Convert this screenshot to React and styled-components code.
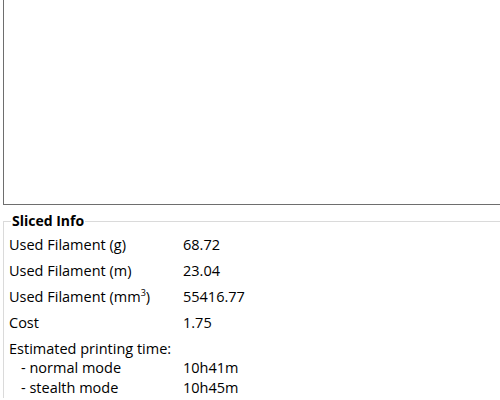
import styled, { createGlobalStyle } from "styled-components";

const Global = createGlobalStyle`
  body {
    margin: 0;
    background: #ffffff;
    font-family: "Open Sans", "Noto Sans", sans-serif;
    color: #000;
  }
`;

const Page = styled.div`
  width: 500px;
  height: 400px;
  overflow: hidden;
  display: flex;
  flex-flow: column;
`;

const Preview = styled.div`
  flex-shrink: 0;
  height: 204px;
  margin-left: 3px;
  border-left: 1px solid #6e6e6e;
  border-bottom: 1px solid #6e6e6e;
  background: #fff;
`;

const GroupBox = styled.fieldset`
  flex-shrink: 0;
  margin: 8px 0 0 3px;
  padding: 0 0 0 5px;
  border: 1px solid #dadada;
  border-right: none;
  border-bottom: none;
  min-width: 0;
`;

const Legend = styled.legend`
  margin-left: 2px;
  padding: 0 1px;
  font-weight: 700;
  font-size: 14px;
  line-height: 16px;
`;

const InfoGrid = styled.div`
  display: grid;
  grid-template-columns: 174px auto;
  font-size: 14.5px;
  margin-top: 3px;
`;

const rowHeight = { normal: "26px", head: "22px", sub: "20px" };

const Cell = styled.div`
  height: ${(p) => rowHeight[p.$kind]};
  line-height: ${(p) => (p.$kind === "sub" ? "20px" : "26px")};
  padding-left: ${(p) => (p.$indent ? "12px" : "0")};
  white-space: nowrap;
`;

const Sup = styled.sup`
  font-size: 9px;
  line-height: 0;
  vertical-align: 6px;
`;

const rows = [
  { label: "Used Filament (g)", value: "68.72", kind: "normal" },
  { label: "Used Filament (m)", value: "23.04", kind: "normal" },
  { label: <>Used Filament (mm<Sup>3</Sup>)</>, value: "55416.77", kind: "normal" },
  { label: "Cost", value: "1.75", kind: "normal" },
  { label: "Estimated printing time:", value: "", kind: "head" },
  { label: "- normal mode", value: "10h41m", kind: "sub" },
  { label: "- stealth mode", value: "10h45m", kind: "sub" },
];

export default function App() {
  return (
    <Page>
      <Global />
      <Preview />
      <GroupBox>
        <Legend>Sliced Info</Legend>
        <InfoGrid>
          {rows.map((r, i) => [
            <Cell key={"l" + i} $kind={r.kind} $indent={r.kind === "sub"}>{r.label}</Cell>,
            <Cell key={"v" + i} $kind={r.kind}>{r.value}</Cell>,
          ])}
        </InfoGrid>
      </GroupBox>
    </Page>
  );
}
